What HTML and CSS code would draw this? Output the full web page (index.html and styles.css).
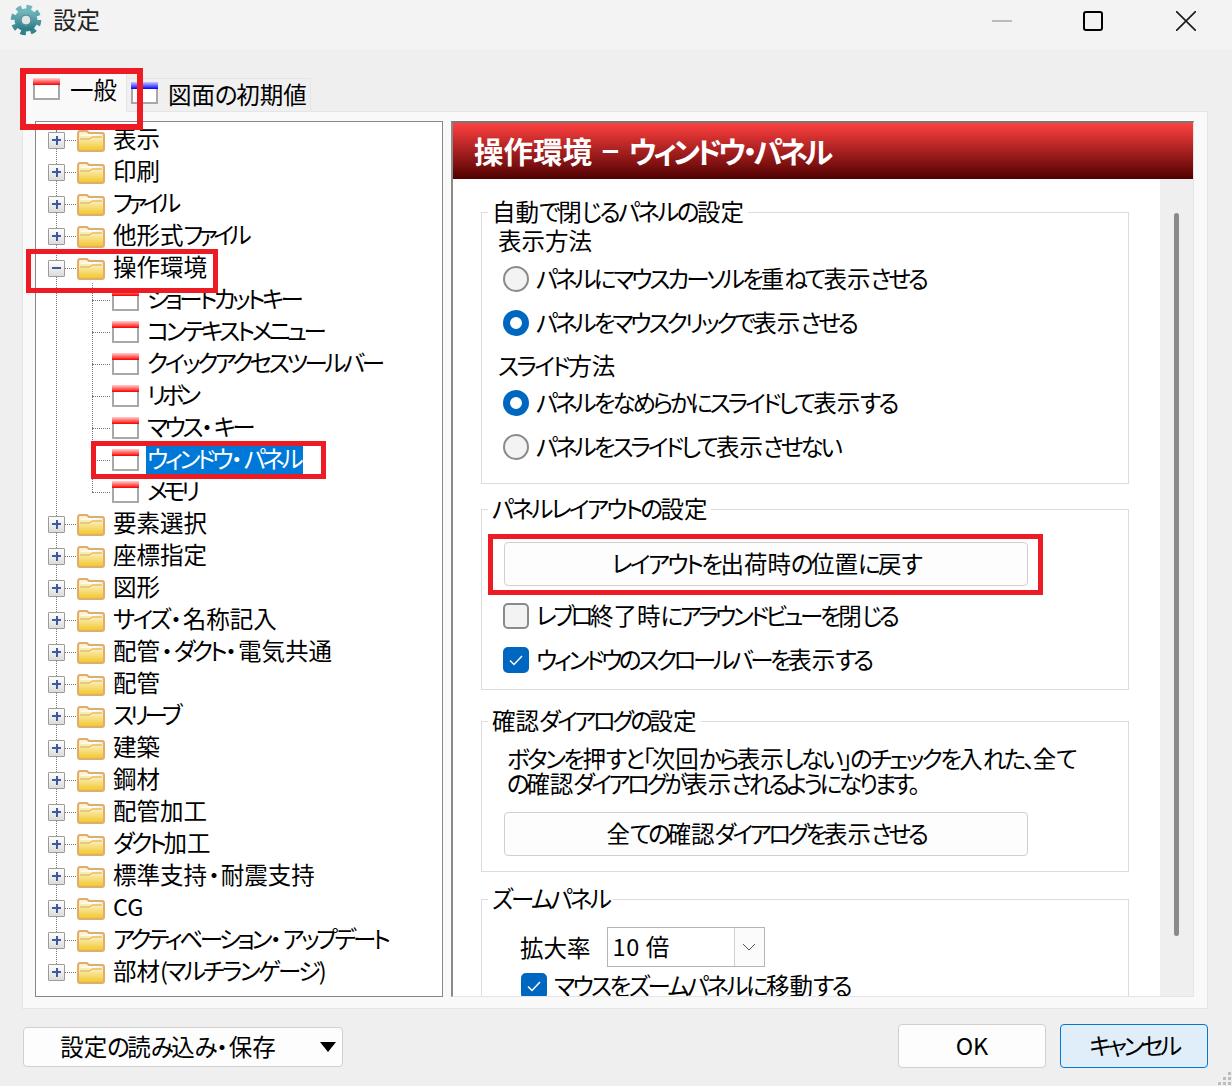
FILE: index.html
```html
<!DOCTYPE html>
<html lang="ja">
<head>
<meta charset="utf-8">
<title>設定</title>
<link rel="stylesheet" href="styles.css">
</head>
<body>
<svg class="defs" width="0" height="0" aria-hidden="true">
  <defs>
    <linearGradient id="fg" x1="0" y1="0" x2="0" y2="1"><stop offset="0" stop-color="#fdf3d0"/><stop offset=".4" stop-color="#fbe9a6"/><stop offset="1" stop-color="#f0c426"/></linearGradient>
    <linearGradient id="gg" x1="0" y1="0" x2="0" y2="1"><stop offset="0" stop-color="#6fb6bd"/><stop offset="1" stop-color="#2f7f8a"/></linearGradient>
    <linearGradient id="rg" x1="0" y1="0" x2="0" y2="1"><stop offset="0" stop-color="#ffd0d0"/><stop offset=".7" stop-color="#ff4040"/><stop offset="1" stop-color="#f00000"/></linearGradient>
    <linearGradient id="bg" x1="0" y1="0" x2="0" y2="1"><stop offset="0" stop-color="#c8c8ff"/><stop offset=".7" stop-color="#4040ff"/><stop offset="1" stop-color="#0000f0"/></linearGradient>
    <symbol id="folder" viewBox="0 0 28 23"><path d="M1 5Q1 2 3 2H10L12 4H25Q27 4 27 6V20Q27 22 25 22H3Q1 22 1 20Z" fill="url(#fg)" stroke="#dfae6c" stroke-width="2"/><path d="M3 10H13L15 8H25" fill="none" stroke="#d3a95c" stroke-width="1"/><path d="M3 6H24" stroke="#fff" stroke-width="1.4"/></symbol>
    <symbol id="page-red" viewBox="0 0 27 22"><rect x="1" y="1" width="25" height="20" fill="#fff" stroke="#a8a8a8" stroke-width="2"/><rect x="0" y="0" width="27" height="7" fill="url(#rg)"/></symbol>
    <symbol id="page-blue" viewBox="0 0 27 22"><rect x="1" y="1" width="25" height="20" fill="#fff" stroke="#a8a8a8" stroke-width="2"/><rect x="0" y="0" width="27" height="7" fill="url(#bg)"/></symbol>
    <symbol id="check" viewBox="0 0 26 26"><rect width="26" height="26" rx="5" fill="#0067c0"/><path d="M7 13.5L11 17.5L19 9" fill="none" stroke="#fff" stroke-width="1.5"/></symbol>
  </defs>
</svg>
<div class="window">
  <header class="titlebar">
    <svg class="gear" viewBox="0 0 32 32" width="32" height="32"><circle cx="16" cy="16" r="12.6" fill="none" stroke="url(#gg)" stroke-width="5.4" stroke-dasharray="5.2 4.7"/><circle cx="16" cy="16" r="8.4" fill="none" stroke="url(#gg)" stroke-width="6"/><circle cx="16" cy="16" r="5" fill="#dfe6e6" stroke="#2f6f78" stroke-width="1"/></svg>
    <span class="title-text">設定</span>
    <div class="controls">
      <span class="ctl-min"></span>
      <span class="ctl-max"></span>
      <svg class="ctl-close" viewBox="0 0 20 20" width="20" height="20"><path d="M0 0L20 20M20 0L0 20" stroke="#1a1a1a" stroke-width="1.6"/></svg>
    </div>
  </header>

  <main class="main">
    <div class="tabs">
      <div class="tab tab-active"><svg class="ico-page"><use href="#page-red"/></svg><span>一般</span></div>
      <div class="tab tab-idle"><svg class="ico-page"><use href="#page-blue"/></svg><span>図面<span class="k">の</span>初期値</span></div>
    </div>
    <div class="pane">
      <nav class="tree">
        <span class="guide guide-root"></span>
        <span class="guide guide-sub"></span>
        <div class="row"><span class="exp plus"></span><svg class="ico-folder"><use href="#folder"/></svg><span class="lbl">表示</span></div>
        <div class="row"><span class="exp plus"></span><svg class="ico-folder"><use href="#folder"/></svg><span class="lbl">印刷</span></div>
        <div class="row"><span class="exp plus"></span><svg class="ico-folder"><use href="#folder"/></svg><span class="lbl"><span class="kx">ファイル</span></span></div>
        <div class="row"><span class="exp plus"></span><svg class="ico-folder"><use href="#folder"/></svg><span class="lbl">他形式<span class="kx">ファイル</span></span></div>
        <div class="row"><span class="exp"></span><svg class="ico-folder"><use href="#folder"/></svg><span class="lbl">操作環境</span></div>
        <div class="row sub"><svg class="ico-page"><use href="#page-red"/></svg><span class="lbl"><span class="kt">ショートカットキー</span></span></div>
        <div class="row sub"><svg class="ico-page"><use href="#page-red"/></svg><span class="lbl"><span class="kt">コンテキストメニュー</span></span></div>
        <div class="row sub"><svg class="ico-page"><use href="#page-red"/></svg><span class="lbl"><span class="kt">クイックアクセスツールバー</span></span></div>
        <div class="row sub"><svg class="ico-page"><use href="#page-red"/></svg><span class="lbl"><span class="kx">リボン</span></span></div>
        <div class="row sub"><svg class="ico-page"><use href="#page-red"/></svg><span class="lbl"><span class="kt">マウス</span><span class="d">・</span><span class="kt">キー</span></span></div>
        <div class="row sub"><svg class="ico-page"><use href="#page-red"/></svg><span class="lbl selected"><span class="kt">ウィンドウ</span><span class="d">・</span><span class="kt">パネル</span></span></div>
        <div class="row sub"><svg class="ico-page"><use href="#page-red"/></svg><span class="lbl"><span class="kx">メモリ</span></span></div>
        <div class="row"><span class="exp plus"></span><svg class="ico-folder"><use href="#folder"/></svg><span class="lbl">要素選択</span></div>
        <div class="row"><span class="exp plus"></span><svg class="ico-folder"><use href="#folder"/></svg><span class="lbl">座標指定</span></div>
        <div class="row"><span class="exp plus"></span><svg class="ico-folder"><use href="#folder"/></svg><span class="lbl">図形</span></div>
        <div class="row"><span class="exp plus"></span><svg class="ico-folder"><use href="#folder"/></svg><span class="lbl"><span class="kn">サイズ</span><span class="d">・</span>名称記入</span></div>
        <div class="row"><span class="exp plus"></span><svg class="ico-folder"><use href="#folder"/></svg><span class="lbl">配管<span class="d">・</span><span class="kt">ダクト</span><span class="d">・</span>電気共通</span></div>
        <div class="row"><span class="exp plus"></span><svg class="ico-folder"><use href="#folder"/></svg><span class="lbl">配管</span></div>
        <div class="row"><span class="exp plus"></span><svg class="ico-folder"><use href="#folder"/></svg><span class="lbl"><span class="kx">スリーブ</span></span></div>
        <div class="row"><span class="exp plus"></span><svg class="ico-folder"><use href="#folder"/></svg><span class="lbl">建築</span></div>
        <div class="row"><span class="exp plus"></span><svg class="ico-folder"><use href="#folder"/></svg><span class="lbl">鋼材</span></div>
        <div class="row"><span class="exp plus"></span><svg class="ico-folder"><use href="#folder"/></svg><span class="lbl">配管加工</span></div>
        <div class="row"><span class="exp plus"></span><svg class="ico-folder"><use href="#folder"/></svg><span class="lbl"><span class="kt">ダクト</span>加工</span></div>
        <div class="row"><span class="exp plus"></span><svg class="ico-folder"><use href="#folder"/></svg><span class="lbl">標準支持<span class="d">・</span>耐震支持</span></div>
        <div class="row"><span class="exp plus"></span><svg class="ico-folder"><use href="#folder"/></svg><span class="lbl">CG</span></div>
        <div class="row"><span class="exp plus"></span><svg class="ico-folder"><use href="#folder"/></svg><span class="lbl"><span class="kt">アクティベーション</span><span class="d">・</span><span class="kt">アップデート</span></span></div>
        <div class="row"><span class="exp plus"></span><svg class="ico-folder"><use href="#folder"/></svg><span class="lbl">部材<span class="kn">(マルチランゲージ)</span></span></div>
      </nav>

      <section class="panel">
        <h1 class="panel-head">操作環境 − <span class="kh">ウィンドウ・パネル</span></h1>
        <div class="panel-body">
          <div class="scroll-area">
            <fieldset class="group g1">
              <legend>自動<span class="kn">で</span>閉<span class="kn">じるパネルの</span>設定</legend>
              <div class="caption">表示方法</div>
              <div class="opt"><span class="radio"></span><span class="opt-text"><span class="k">パネルにマウスカーソルを</span>重<span class="k">ねて</span>表示<span class="k">させる</span></span></div>
              <div class="opt"><span class="radio on"></span><span class="opt-text"><span class="k">パネルをマウスクリックで</span>表示<span class="k">させる</span></span></div>
              <div class="caption caption-2"><span class="kn">スライド</span>方法</div>
              <div class="opt"><span class="radio on"></span><span class="opt-text"><span class="k">パネルをなめらかにスライドして</span>表示<span class="k">する</span></span></div>
              <div class="opt"><span class="radio"></span><span class="opt-text"><span class="k">パネルをスライドして</span>表示<span class="k">させない</span></span></div>
            </fieldset>
            <fieldset class="group g2">
              <legend><span class="kn">パネルレイアウトの</span>設定</legend>
              <button class="wide-btn"><span class="kn">レイアウトを</span>出荷時<span class="kn">の</span>位置<span class="kn">に</span>戻<span class="kn">す</span></button>
              <div class="opt opt-check"><span class="box"></span><span class="opt-text"><span class="kt">レブロ</span>終了時<span class="kt">にアラウンドビューを</span>閉<span class="kt">じる</span></span></div>
              <div class="opt opt-check"><svg class="ico-check"><use href="#check"/></svg><span class="opt-text"><span class="kt">ウィンドウのスクロールバーを</span>表示<span class="kt">する</span></span></div>
            </fieldset>
            <fieldset class="group g3">
              <legend>確認<span class="kt">ダイアログの</span>設定</legend>
              <p class="note"><span class="kn">ボタンを</span>押<span class="kn">すと「</span>次回<span class="kn">から</span>表示<span class="kn">しない」のチェックを</span>入<span class="kn">れた、</span>全<span class="kn">て</span><br><span class="kt">の</span>確認<span class="kt">ダイアログが</span>表示<span class="kt">されるようになります。</span></p>
              <button class="wide-btn">全<span class="kt">ての</span>確認<span class="kt">ダイアログを</span>表示<span class="kt">させる</span></button>
            </fieldset>
            <fieldset class="group g4">
              <legend><span class="kn">ズームパネル</span></legend>
              <div class="zoom-row">
                <span class="zoom-label">拡大率</span>
                <div class="combo"><span class="combo-val">10 倍</span><span class="combo-arrow"><svg viewBox="0 0 14 8" width="14" height="8"><path d="M1 1L7 7L13 1" fill="none" stroke="#555" stroke-width="1"/></svg></span></div>
              </div>
              <div class="opt opt-zoom"><svg class="ico-check"><use href="#check"/></svg><span class="opt-text"><span class="kn">マウスをズームパネルに</span>移動<span class="kn">する</span></span></div>
            </fieldset>
          </div>
          <div class="scrollbar"><span class="thumb"></span></div>
        </div>
      </section>
    </div>

    <footer class="footer">
      <button class="btn btn-menu"><span>設定<span class="kn">の</span>読<span class="kn">み</span>込<span class="kn">み</span><span class="d">・</span>保存</span><i class="tri"></i></button>
      <div class="footer-right">
        <button class="btn btn-ok">OK</button>
        <button class="btn btn-ok btn-focus"><span class="kt">キャンセル</span></button>
      </div>
    </footer>

    <span class="mark mark-tab"></span>
    <span class="mark mark-env"></span>
    <span class="mark mark-sel"></span>
    <span class="mark mark-btn"></span>
    <svg class="grip" viewBox="0 0 14 14" width="14" height="14"><g fill="#bdbdbd"><rect x="10" y="0" width="3" height="3"/><rect x="5" y="5" width="3" height="3"/><rect x="10" y="5" width="3" height="3"/><rect x="0" y="10" width="3" height="3"/><rect x="5" y="10" width="3" height="3"/><rect x="10" y="10" width="3" height="3"/></g></svg>
  </main>
</div>
</body>
</html>
```
FILE: styles.css
```css
* { box-sizing: border-box; }
html, body { margin: 0; height: 100%; }
body {
  width: 1232px;
  height: 1086px;
  overflow: hidden;
  background: #efefef;
  color: #000;
  font-family: "Noto Sans CJK JP", "Noto Sans", sans-serif;
  font-size: 23.5px;
  font-feature-settings: "palt";
  line-height: 30px;
}
.defs { position: absolute; }
.window { display: flex; flex-direction: column; height: 1086px; }

/* kana runs are set tighter than kanji, as in the UI font of the original */
.k { letter-spacing: -3px; }
.kn { letter-spacing: -2.6px; }
.kt { letter-spacing: -3.4px; }
.kx { letter-spacing: -4.4px; }
.kh { letter-spacing: -3.8px; }
.d { padding: 0 1px; }

/* title bar */
.titlebar {
  height: 49px;
  flex: none;
  background: #f3f3f3;
  display: flex;
  align-items: center;
  padding-left: 10px;
}
.gear { flex: none; margin-top: -9px; }
.title-text { margin-left: 11px; margin-top: -12px; color: #222; }
.controls { margin-left: auto; display: flex; align-items: center; height: 20px; margin-top: -8px; padding-right: 36px; }
.ctl-min { width: 20px; height: 2px; background: #bcbcbc; margin-right: 71px; }
.ctl-max { width: 20px; height: 20px; border: 2px solid #000; border-radius: 3px; margin-right: 73px; }

/* main */
.main { position: relative; flex: 1; padding: 0 24px 0 22px; }
.tabs { height: 63px; display: flex; align-items: flex-end; position: relative; z-index: 1; margin-bottom: -1px; }
.tab { display: flex; align-items: center; }
.tab-active {
  width: 105px; height: 42px; background: #f9f9f9;
  border-right: 1px solid #e5e5e5;
  padding: 0 0 4px 11px; gap: 10px;
}
.tab-idle {
  width: 184px; height: 34px; background: #f0f0f0;
  border: 1px solid #e5e5e5; border-left: 0;
  padding: 0 0 2px 4px; gap: 10px;
}
.tab-idle .k { letter-spacing: -1.5px; }
.tab-idle .ico-page { margin-bottom: 3px; }
.ico-page { width: 27px; height: 22px; flex: none; }
.ico-folder { width: 28px; height: 23px; flex: none; }

.pane {
  height: 898px;
  background: #f9f9f9;
  border: 1px solid #e5e5e5;
  padding: 9px 13px 11px 12px;
  display: flex;
  gap: 8px;
}

/* tree */
.tree {
  position: relative;
  width: 408px;
  flex: none;
  background: #fff;
  border: 1px solid #828790;
  padding-top: 2px;
  overflow: hidden;
}
.guide { position: absolute; width: 0; border-left: 1px dotted #777; }
.guide-root { left: 20px; top: 8px; height: 842px; }
.guide-sub { left: 56px; top: 161px; height: 209px; }
.row { position: relative; height: 32px; display: flex; align-items: center; padding-left: 12px; white-space: nowrap; }
.exp {
  position: relative;
  width: 17px; height: 17px; flex: none;
  border: 1px solid #9b9b9b;
  border-radius: 1px;
  background: linear-gradient(#fff, #dcdcdc);
  margin-right: 12px;
}
.exp::before { content: ""; position: absolute; left: 3px; top: 6.5px; width: 9px; height: 2px; background: #3d5a9e; }
.plus::after { content: ""; position: absolute; left: 6.5px; top: 3px; width: 2px; height: 9px; background: #3d5a9e; }
.row:not(.sub)::before { content: ""; position: absolute; left: 29px; top: 16px; width: 11px; border-top: 1px dotted #777; }
.lbl { margin-left: 8px; margin-bottom: 4px; }
.sub { padding-left: 76px; }
.sub::before { content: ""; position: absolute; left: 56px; top: 16px; width: 18px; border-top: 1px dotted #777; }
.selected { background: #0078d7; color: #fff; margin: 0 0 0 7px; padding: 0 3px 0 1px; height: 28px; line-height: 25px; }

/* right panel */
.panel {
  flex: 1;
  min-width: 0;
  display: flex;
  flex-direction: column;
  border-top: 2px solid #777;
  border-left: 2px solid #8a8a8a;
  border-right: 1px solid #e5e5e5;
  border-bottom: 1px solid #e5e5e5;
  overflow: hidden;
}
.panel-head {
  margin: 0;
  height: 56px;
  flex: none;
  padding-left: 21px;
  font-size: 29.5px;
  font-weight: 700;
  line-height: 54px;
  word-spacing: 3px;
  color: #fff;
  background: linear-gradient(#ff4040, #500000);
}
.panel-body { flex: 1; min-height: 0; display: flex; }
.scroll-area { flex: 1; min-width: 0; background: #fff; padding: 18px 31px 0 28px; overflow: hidden; }
.scrollbar { width: 33px; flex: none; background: #efefef; padding: 34px 0 0 14px; }
.thumb { display: block; width: 5px; height: 723px; background: #8a8a8a; border-radius: 3px; }

.group { margin: 0; min-width: 0; padding: 0; border: 1px solid #dcdcdc; position: relative; }
.group legend { padding: 0 4px 2px; margin-left: 6px; line-height: 28px; }
.g1 { padding: 0 0 14px 0; }
.g2 { margin-top: 10px; padding: 18px 0 7px; }
.g3 { margin-top: 16px; padding: 10px 0 15px; }
.g4 { margin-top: 12px; padding: 13px 0 40px; }
.caption { padding-left: 16px; height: 30px; line-height: 27px; }
.caption-2 { height: 36px; padding-top: 7px; }
.opt { height: 44px; display: flex; align-items: center; padding-left: 21px; gap: 7px; white-space: nowrap; }
.opt-text { padding-bottom: 2px; }
.radio { width: 26px; height: 26px; flex: none; border-radius: 50%; background: #f3f3f3; border: 2px solid #8a8a8a; }
.radio.on { background: #fff; border: 7px solid #0067c0; }
.box { width: 26px; height: 26px; flex: none; border-radius: 5px; background: #f3f3f3; border: 2px solid #8a8a8a; }
.ico-check { width: 26px; height: 26px; flex: none; }
.wide-btn {
  display: block;
  margin-left: 22px;
  width: 524px;
  height: 44px;
  background: #fdfdfd;
  border: 1px solid #d0d0d0;
  border-radius: 4px;
  font: inherit;
  font-feature-settings: inherit;
  color: #000;
  padding: 0 0 2px;
}
.g2 .wide-btn { margin-bottom: 8px; }
.note { margin: 0 0 16px 25px; line-height: 25px; white-space: nowrap; }
.zoom-row { display: flex; align-items: center; height: 40px; padding-left: 38px; gap: 16px; }
.zoom-label { padding-bottom: 1px; }
.combo { width: 158px; height: 40px; display: flex; border: 1px solid #b4b4b4; background: #fff; }
.combo-val { flex: 1; padding-left: 5px; line-height: 37px; letter-spacing: .6px; }
.combo-arrow { width: 30px; flex: none; border-left: 1px solid #d0d0d0; display: flex; align-items: center; justify-content: center; background: #fbfbfb; }
.opt-zoom { padding-left: 39px; height: 26px; margin-top: 6px; }

/* footer */
.footer { display: flex; justify-content: space-between; align-items: flex-end; height: 59px; }
.btn { font: inherit; font-feature-settings: inherit; color: #000; padding: 0 0 2px; background: #fdfdfd; border: 1px solid #d0d0d0; border-radius: 4px; }
.btn-menu { position: relative; width: 320px; height: 40px; margin-left: 1px; margin-bottom: 1px; padding-right: 30px; }
.tri { position: absolute; right: 6px; top: 14px; width: 0; height: 0; border: 8.5px solid transparent; border-top: 10px solid #000; border-bottom: 0; }
.footer-right { display: flex; gap: 14px; }
.btn-ok { width: 148px; height: 44px; }
.btn-focus { background: #e0eef9; border-color: #0078d4; }

/* annotations */
.mark { position: absolute; border: 6px solid #ed1c24; z-index: 5; pointer-events: none; }
.mark-tab { left: 20px; top: 19px; width: 123px; height: 62px; }
.mark-env { left: 26px; top: 200px; width: 192px; height: 44px; border-width: 5px; }
.mark-sel { left: 91px; top: 392px; width: 235px; height: 38px; border-width: 5px; }
.mark-btn { left: 488px; top: 485px; width: 555px; height: 61px; border-width: 5px; }
.grip { position: absolute; right: 0; bottom: 0; }
```
